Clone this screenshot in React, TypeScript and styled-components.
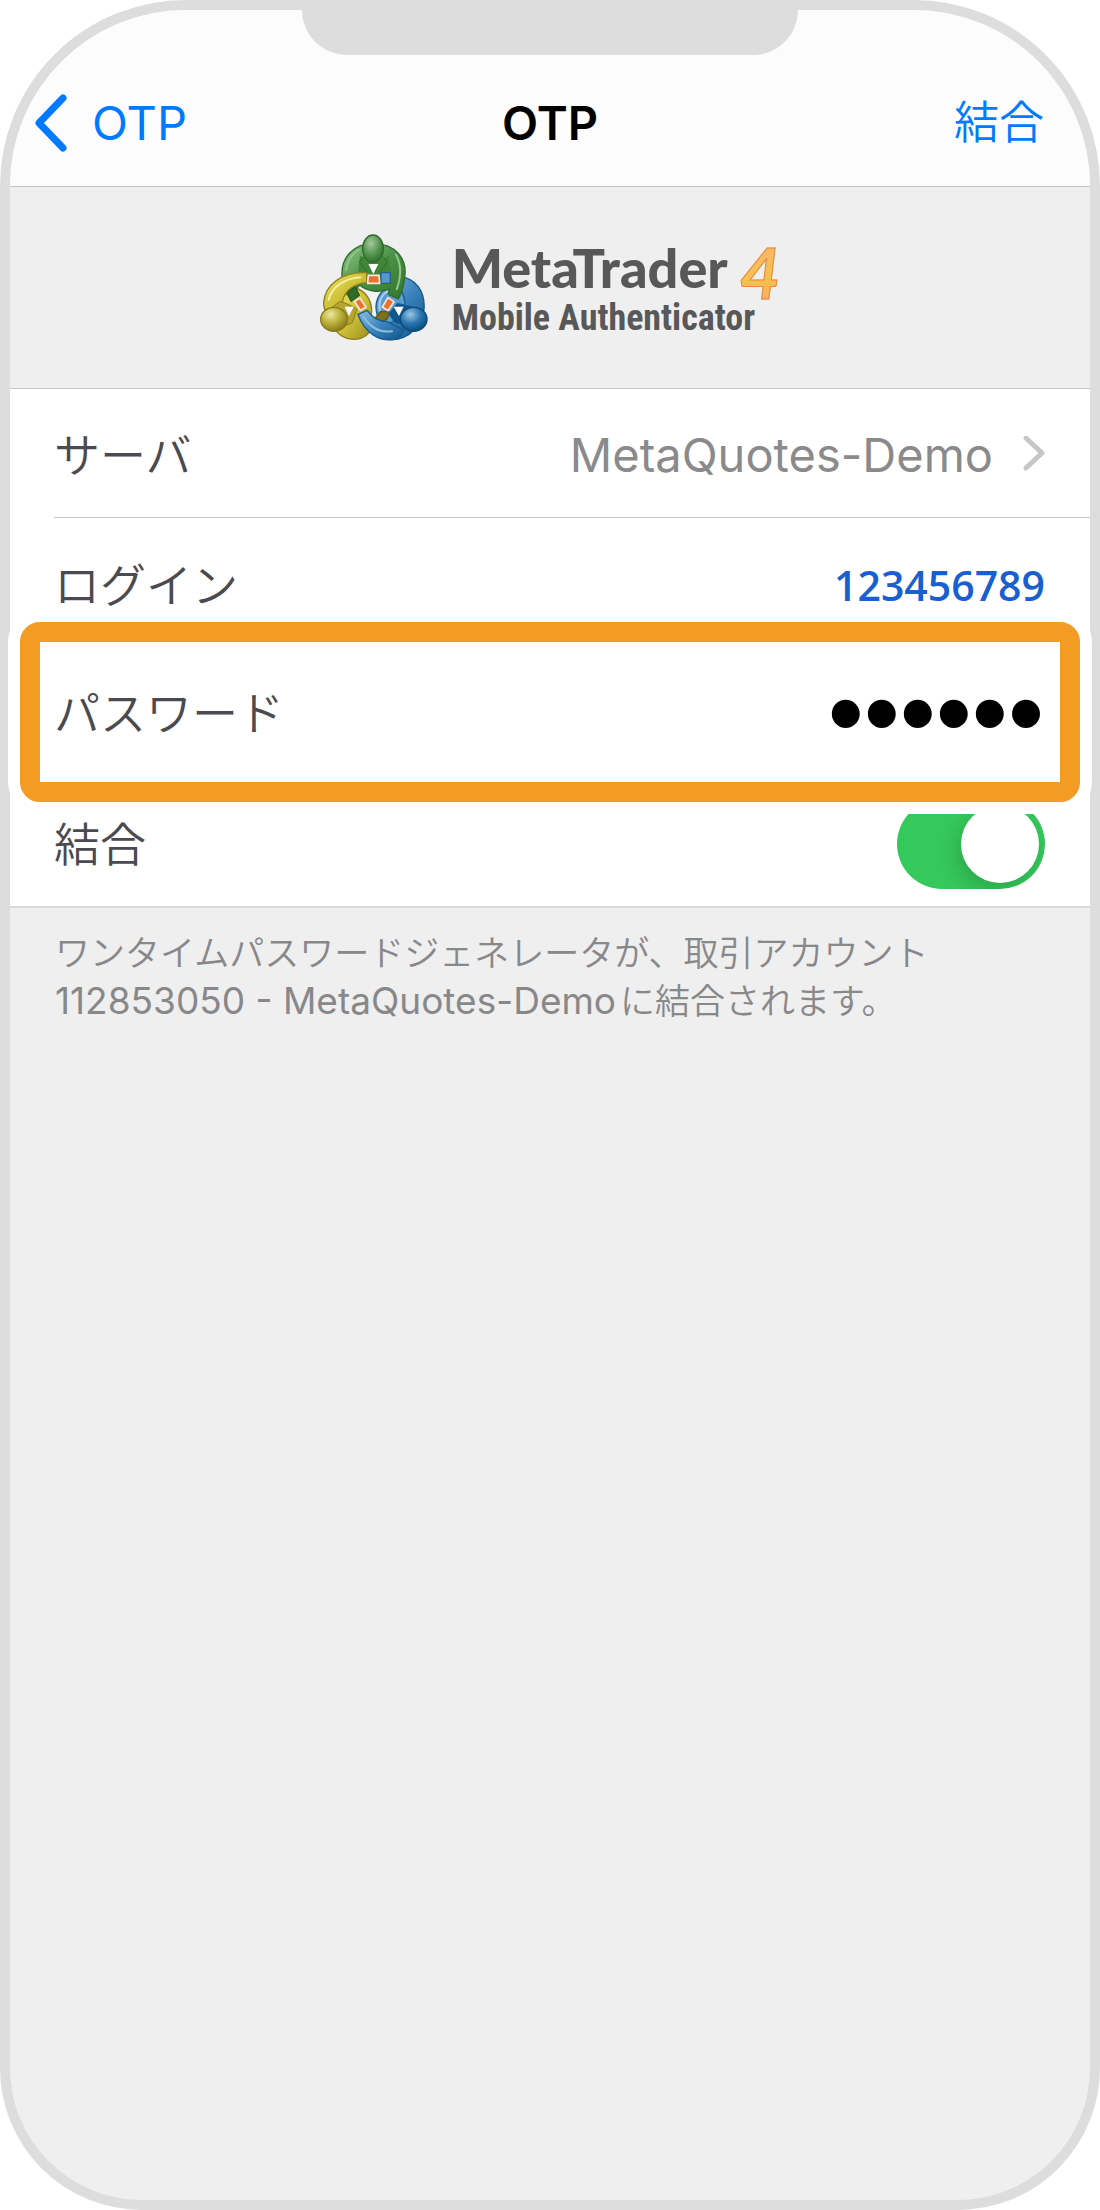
import React, { useState } from "react";
import styled, { createGlobalStyle } from "styled-components";

const GlobalStyle = createGlobalStyle`
  *, *::before, *::after { box-sizing: border-box; }
  body {
    margin: 0;
    background: #fff;
    font-family: Inter, "Noto Sans CJK JP", sans-serif;
    color: #4a4a50;
  }
  button, input { font: inherit; color: inherit; }
`;

const Phone = styled.main`
  display: flex;
  flex-direction: column;
  min-height: 100vh;
  border: 10px solid #ddd;
  border-radius: 186px 186px 142px 142px;
  background: #efefef;
`;

const TopBar = styled.header`
  border-bottom: 1px solid #c2c2c4;
  border-radius: 176px 176px 0 0;
  background: #fcfcfc;
`;

const Notch = styled.div`
  width: 46%;
  height: 45px;
  margin: 0 auto;
  border-radius: 0 0 45px 45px;
  background: #ddd;
`;

const Nav = styled.nav`
  display: grid;
  grid-template-columns: 1fr auto 1fr;
  align-items: center;
  height: 131px;
  padding-top: 4px;
`;

const BackLink = styled.a`
  display: flex;
  align-items: center;
  gap: 24px;
  padding-left: 24px;
  color: #007aff;
  font-size: 47px;
  line-height: 60px;
  text-decoration: none;
`;

const Title = styled.h1`
  margin: 0;
  color: #000;
  font-size: 47px;
  line-height: 60px;
  font-weight: 600;
`;

const BindButton = styled.button`
  justify-self: end;
  padding: 0 46px 0 0;
  border: 0;
  background: none;
  color: #007aff;
  font-size: 45px;
  line-height: 60px;
  font-weight: 350;
  cursor: pointer;
`;

const Banner = styled.section`
  display: flex;
  align-items: center;
  justify-content: center;
  gap: 24px;
  height: 202px;
  border-bottom: 1px solid #c8c8ca;
`;

const Wordmark = styled.div`
  color: #585858;
  font-weight: 700;
`;

const ProductName = styled.div`
  display: flex;
  align-items: center;
  gap: 12px;
  height: 60px;
  font-family: Lato, sans-serif;
  font-size: 54px;
  line-height: 60px;
  font-weight: 900;
`;

const Version = styled.span`
  padding-top: 8px;
  background: linear-gradient(#f5b27c, #f6c24c 65%, #f3a66c);
  background-clip: text;
  -webkit-text-fill-color: transparent;
  -webkit-text-stroke: 1px #ee8640;
  font-size: 70px;
  line-height: 72px;
  font-weight: 700;
  font-style: italic;
`;

const ProductLine = styled.div`
  font-family: "Liberation Sans Narrow", "Roboto Condensed", sans-serif;
  font-size: 36px;
  line-height: 40px;
`;

const Form = styled.form`
  border-bottom: 2px solid #d9d9da;
  background: #fff;
`;

const Row = styled.div<{ $divided?: boolean }>`
  display: flex;
  align-items: center;
  justify-content: space-between;
  height: 129px;
  margin-left: 44px;
  padding: 4px 45px 0 0;
  border-bottom: ${(p) => (p.$divided ? "1px solid #c8c8ca" : "0")};
`;

const HighlightedRow = styled(Row)`
  position: relative;
  height: 180px;
  margin: -25px 10px;
  padding: 2px 16px 0 14px;
  border: 20px solid #f49b24;
  border-radius: 20px;
  background: #fff;
  box-shadow: 0 0 0 12px #fff;
`;

const Label = styled.label`
  flex: none;
  font-size: 46px;
  line-height: 60px;
  font-weight: 350;
`;

const ServerButton = styled.button`
  display: flex;
  align-items: center;
  gap: 30px;
  padding: 0;
  border: 0;
  background: none;
  color: #8a8a8c;
  font-size: 47px;
  line-height: 60px;
  cursor: pointer;
`;

const Field = styled.input`
  flex: 1;
  min-width: 0;
  height: 60px;
  padding: 0;
  border: 0;
  outline: 0;
  background: none;
  text-align: right;
`;

const LoginField = styled(Field)`
  color: #1a5fd0;
  font-family: "Open Sans", "Noto Sans", sans-serif;
  font-size: 41px;
  font-weight: 600;
`;

const PasswordField = styled(Field)`
  height: 120px;
  color: #000;
  font-family: "Liberation Sans", sans-serif;
  font-size: 103px;
`;

const Switch = styled.input`
  display: flex;
  align-items: center;
  appearance: none;
  width: 148px;
  height: 90px;
  margin: 0;
  padding: 6px;
  overflow: hidden;
  border-radius: 45px;
  background: #d9d9dc;
  cursor: pointer;

  &::before {
    content: "";
    width: 78px;
    height: 78px;
    border-radius: 50%;
    background: #fff;
    box-shadow: -4px 8px 20px rgba(0, 0, 0, 0.16);
  }

  &:checked {
    justify-content: flex-end;
    background: #35c85a;
  }
`;

const Note = styled.p`
  margin: 0;
  padding: 21px 45px;
  color: #88888a;
  font-size: 35px;
  line-height: 47px;
  font-weight: 350;
`;

const NoteLatin = styled.span`
  margin-right: 4px;
  font-size: 37px;
  font-weight: 400;
`;

function BrandMark() {
  return (
    <svg width="108" height="108" viewBox="60 70 324 324" aria-hidden="true">
      <defs>
        <linearGradient id="green" x1="0" y1="0" x2="1" y2="1">
          <stop offset="0" stopColor="#8fc684" />
          <stop offset="0.5" stopColor="#4b9147" />
          <stop offset="1" stopColor="#34752f" />
        </linearGradient>
        <linearGradient id="yellow" x1="0" y1="0" x2="1" y2="1">
          <stop offset="0" stopColor="#eee26c" />
          <stop offset="0.5" stopColor="#cfc238" />
          <stop offset="1" stopColor="#9b8c22" />
        </linearGradient>
        <linearGradient id="blue" x1="0" y1="0" x2="1" y2="1">
          <stop offset="0" stopColor="#8dbde4" />
          <stop offset="0.5" stopColor="#3d84bd" />
          <stop offset="1" stopColor="#0b5388" />
        </linearGradient>
        <radialGradient id="greenHead" cx="0.4" cy="0.3" r="0.7">
          <stop offset="0" stopColor="#a4c99f" />
          <stop offset="0.6" stopColor="#54954f" />
          <stop offset="1" stopColor="#357230" />
        </radialGradient>
        <radialGradient id="yellowHead" cx="0.38" cy="0.3" r="0.75">
          <stop offset="0" stopColor="#eee9a0" />
          <stop offset="0.5" stopColor="#bbae38" />
          <stop offset="1" stopColor="#82741a" />
        </radialGradient>
        <radialGradient id="blueHead" cx="0.38" cy="0.3" r="0.75">
          <stop offset="0" stopColor="#9cc6e6" />
          <stop offset="0.5" stopColor="#2c76b0" />
          <stop offset="1" stopColor="#04487a" />
        </radialGradient>
      </defs>
      <g strokeWidth="4" strokeLinejoin="round">
        <circle cx="220" cy="262" r="52" fill="#f4f4f4" />
        {/* blue figure: body */}
        <circle cx="300" cy="290" r="72" fill="#5b9dd0" stroke="#175b91" />
        <path d="M305 199c42 6 67 42 67 84 0 60-44 104-98 104-22 0-40-6-54-16l60-40c18 0 30-14 34-30 4-30-4-58-22-76Z" fill="url(#blue)" stroke="#175b91" />
        <path d="M240 300c-6-22 2-46 22-58" fill="none" stroke="#a9d0ee" strokeWidth="6" strokeLinecap="round" />
        {/* yellow figure: body */}
        <path d="M166 232c30 8 49 36 49 68-1 32-4 50-8 66-12 14-24 20-42 20-28 0-50-12-62-34l4-80Z" fill="url(#yellow)" stroke="#8b7e1e" />
        {/* green figure: shoulders, torso and both arms */}
        <path d="M126 198C122 140 160 99 221 99c68 0 98 48 94 92-2 32-8 52-20 74l-30-14 4-16c-30 12-68 8-90-12l-12 14-12 26-12-14 2-20Z" fill="url(#green)" stroke="#2e6b2b" />
        <path d="M140 246l26-18 12 26-24 18Z" fill="#2f6b2b" stroke="#255a23" />
        <path d="M180 136l-6 50h26l20 4 22-4h30l-6-50-22 10h-36Z" fill="#418539" stroke="none" />
        <path d="M192 138l-14 16 24 32M248 138l14 16-24 32" fill="none" stroke="#2e6b2b" strokeWidth="3" />
        <path d="M205 160h30l-15 30Z" fill="#fff" />
        <path d="M138 178c4-28 18-48 38-60M288 132c18 32 14 70 2 104" fill="none" stroke="#91c58a" strokeWidth="6" strokeLinecap="round" />
        {/* yellow figure: raised arm and collar */}
        <path d="M200 186c-76-4-126 38-129 90q0 18 8 28l48-18c-2-36 26-66 73-70Z" fill="url(#yellow)" stroke="#8b7e1e" />
        <path d="M97 290l22-18 24 8 28 16-14 40-28 12Z" fill="#b3a530" stroke="#8b7e1e" strokeWidth="3" />
        <path d="M134 288h27l-14 28Z" fill="#fff" />
        <path d="M86 268c10-42 48-64 96-68" fill="none" stroke="#f4ee9f" strokeWidth="6" strokeLinecap="round" />
        {/* blue figure: collar and lower arm reaching across */}
        <path d="M226 322l16-20 26 2-6 20-18 12Z" fill="#7d701c" stroke="#625713" />
        <path d="M266 310l26-32 44 10-8 56-42-8Z" fill="#0d568f" stroke="#175b91" strokeWidth="3" />
        <path d="M281 288h30l-14 28Z" fill="#fff" />
        <path d="M174 311l28-12c16 24 36 34 60 34l50 24-14 26c-60 18-106-20-124-72Z" fill="url(#blue)" stroke="#175b91" />
        <path d="M243 186h28v32h-28Z" fill="#5799cd" stroke="#235f93" />
        <path d="M192 320c22 34 52 46 84 42" fill="none" stroke="#8cbde2" strokeWidth="6" strokeLinecap="round" />
        {/* cards being passed round */}
        <g fill="#e97132" stroke="#fbe6d8" strokeWidth="5">
          <path d="M205 194h32l2 24h-36Z" />
          <path d="M163 272l17-9 18 27-17 9Z" />
          <path d="M264 261l18 12-18 27-17-11Z" />
        </g>
        <ellipse cx="219" cy="114" rx="31" ry="41" fill="url(#greenHead)" stroke="#2e6b2b" />
        <ellipse cx="102" cy="326" rx="40" ry="36" fill="url(#yellowHead)" stroke="#857819" />
        <ellipse cx="341" cy="326" rx="40" ry="36" fill="url(#blueHead)" stroke="#084a7c" />
      </g>
    </svg>
  );
}

export default function App() {
  const [login, setLogin] = useState("123456789");
  const [password, setPassword] = useState("secret");
  const [bound, setBound] = useState(true);

  return (
    <>
      <GlobalStyle />
      <Phone lang="ja">
        <TopBar>
          <Notch />
          <Nav>
            <BackLink href="#otp">
              <svg width="34" height="58" viewBox="0 0 34 58" fill="none" stroke="#007aff" strokeWidth="7" strokeLinecap="round" strokeLinejoin="round" aria-hidden="true">
                <path d="M29 4 5 29l24 25" />
              </svg>
              OTP
            </BackLink>
            <Title>OTP</Title>
            <BindButton type="button">結合</BindButton>
          </Nav>
        </TopBar>
        <Banner>
          <BrandMark />
          <Wordmark>
            <ProductName>
              MetaTrader
              <Version>4</Version>
            </ProductName>
            <ProductLine>Mobile Authenticator</ProductLine>
          </Wordmark>
        </Banner>
        <Form>
          <Row $divided>
            <Label htmlFor="server">サーバ</Label>
            <ServerButton id="server" type="button">
              MetaQuotes-Demo
              <svg width="22" height="38" viewBox="0 0 22 38" fill="none" stroke="#c6c6c8" strokeWidth="5" strokeLinecap="round" strokeLinejoin="round" aria-hidden="true">
                <path d="M3 2l16 15L3 32" />
              </svg>
            </ServerButton>
          </Row>
          <Row>
            <Label htmlFor="login">ログイン</Label>
            <LoginField id="login" inputMode="numeric" value={login} onChange={(e) => setLogin(e.target.value)} />
          </Row>
          <HighlightedRow>
            <Label htmlFor="password">パスワード</Label>
            <PasswordField id="password" type="password" value={password} onChange={(e) => setPassword(e.target.value)} />
          </HighlightedRow>
          <Row>
            <Label htmlFor="bind">結合</Label>
            <Switch id="bind" type="checkbox" checked={bound} onChange={(e) => setBound(e.target.checked)} />
          </Row>
        </Form>
        <Note>
          ワンタイムパスワードジェネレータが、取引アカウント
          <NoteLatin> 112853050 - MetaQuotes-Demo</NoteLatin>に結合されます。
        </Note>
      </Phone>
    </>
  );
}
